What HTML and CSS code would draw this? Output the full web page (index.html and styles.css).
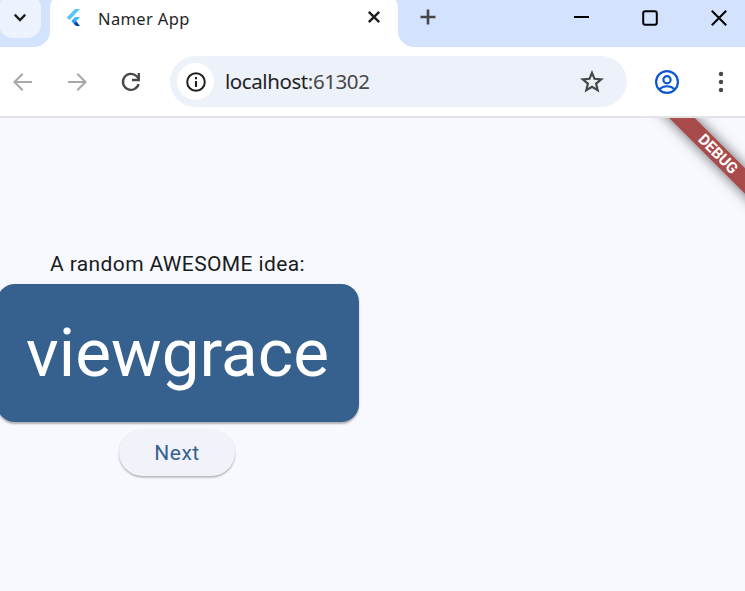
FILE: index.html
```html
<!DOCTYPE html>
<html lang="en">
<head>
<meta charset="utf-8">
<title>Namer App</title>
<link rel="stylesheet" href="styles.css">
</head>
<body>
<div class="window">
  <header class="titlebar">
    <div class="strip-left">
      <div class="tab-search"><svg width="14" height="10" viewBox="0 0 14 10"><path d="M1.7 1.7 7 7l5.3-5.3" fill="none" stroke="#1f1f1f" stroke-width="2.4"/></svg></div>
    </div>
    <div class="tab-slot">
      <div class="tab">
        <svg class="favicon" width="16" height="20" viewBox="0 0 16 20">
          <path d="M9 1h5L3.5 12 .8 9.5z" fill="#54c5f8"/>
          <path d="M9.2 9h4.8L9.7 13.4l1.3 1.4-2.5 2L5.5 13z" fill="#42b8f5"/>
          <path d="M5.5 13.2 8 10.8l2.6 2.5L8 15.8z" fill="#29a0ef"/>
          <path d="M7.8 15.8 10.4 13.6 14 18h-3.8z" fill="#01479b"/>
        </svg>
        <span class="tab-title">Namer App</span>
        <svg class="tab-close" width="14" height="14" viewBox="0 0 14 14"><path d="m1.8 1.8 10.4 10.4M12.2 1.8 1.8 12.2" stroke="#1f1f1f" stroke-width="2.4"/></svg>
      </div>
    </div>
    <div class="strip-right">
      <svg class="new-tab" width="16" height="16" viewBox="0 0 16 16"><path d="M8 .5v15M.5 8h15" stroke="#474747" stroke-width="2.6"/></svg>
      <svg class="minimize" width="15" height="2" viewBox="0 0 15 2"><path d="M0 1h15" stroke="#000" stroke-width="2"/></svg>
      <svg class="maximize" width="16" height="16" viewBox="0 0 16 16"><rect x="1.2" y="1.2" width="13.6" height="13.6" rx="2" fill="none" stroke="#000" stroke-width="2"/></svg>
      <svg class="close" width="16" height="16" viewBox="0 0 16 16"><path d="m.8.8 14.4 14.4M15.2.8.8 15.2" stroke="#000" stroke-width="2"/></svg>
    </div>
  </header>
  <nav class="toolbar">
    <svg class="back" width="20" height="18" viewBox="0 0 20 18"><path d="M19 9H2M9.7.8 1.5 9l8.2 8.2" fill="none" stroke="#a8a8a8" stroke-width="2.1"/></svg>
    <svg class="forward" width="20" height="18" viewBox="0 0 20 18"><path d="M1 9h17M10.3.8 18.5 9l-8.2 8.2" fill="none" stroke="#a8a8a8" stroke-width="2.1"/></svg>
    <svg class="reload" width="20" height="20" viewBox="0 0 20 20"><path d="M17.6 12.2A8 8 0 1 1 15.7 4.3L18 6.8" fill="none" stroke="#474747" stroke-width="2.3"/><path d="M17.8 1v7H11" fill="none" stroke="#474747" stroke-width="2.3"/></svg>
    <div class="omnibox">
      <div class="site-info"><svg width="20" height="20" viewBox="0 0 20 20"><circle cx="10" cy="10" r="8.8" fill="none" stroke="#1f1f1f" stroke-width="2"/><path d="M10 9v6M10 5v2.2" stroke="#1f1f1f" stroke-width="2.1"/></svg></div>
      <div class="url">localhost<span class="port">:61302</span></div>
      <svg class="star" width="24" height="23" viewBox="0 0 24 23"><path d="m12 2.8 2.5 6 6.7.6-5.1 4.3 1.6 6.4-5.7-3.4-5.7 3.4 1.6-6.4-5.1-4.3 6.7-.6z" fill="none" stroke="#474747" stroke-width="2.2"/></svg>
    </div>
    <svg class="profile" width="26" height="26" viewBox="0 0 26 26"><g fill="none" stroke="#0b57d0" stroke-width="2.2"><circle cx="13" cy="13" r="10.9"/><circle cx="13" cy="10.7" r="3.6"/><path d="M5.3 20.3c4.2-4.1 11.2-4.1 15.4 0"/></g></svg>
    <svg class="menu" width="6" height="22" viewBox="0 0 6 22"><g fill="#474747"><circle cx="3" cy="3" r="2.2"/><circle cx="3" cy="11" r="2.2"/><circle cx="3" cy="19" r="2.2"/></g></svg>
  </nav>
  <main class="page">
    <div class="banner">DEBUG</div>
    <div class="column">
      <p class="label">A random AWESOME idea:</p>
      <div class="card">viewgrace</div>
      <button class="next">Next</button>
    </div>
  </main>
</div>
</body>
</html>
```
FILE: styles.css
```css
* { box-sizing: border-box; }
body { margin: 0; background: #fff; }
svg { display: block; flex: none; }
.window { width: 745px; height: 591px; display: flex; flex-direction: column; overflow: hidden; }

.titlebar { display: flex; height: 47px; flex: none; overflow: hidden; background: #fff; }
.strip-left { width: 50px; background: #d3e3fd; border-bottom-right-radius: 16px; }
.tab-search { width: 42px; height: 44px; margin: -6px 0 0 -1px; border-radius: 14px; background: #ecf3fe; display: flex; align-items: center; justify-content: center; padding-top: 3px; }
.tab-slot { width: 348px; background: #d3e3fd; }
.tab { height: 54px; margin-top: -7px; padding: 0 17px 0 16px; border-radius: 15px 15px 0 0; background: #fff; display: flex; align-items: center; font-family: "Noto Sans", sans-serif; font-size: 16.5px; letter-spacing: .35px; color: #1f1f1f; }
.favicon { margin-top: -5px; }
.tab-title { flex: 1; margin: -4px 0 0 16px; white-space: nowrap; }
.tab-close { margin-top: -6px; }
.strip-right { flex: 1; display: flex; align-items: center; background: #d3e3fd; border-bottom-left-radius: 16px; padding: 0 18px 11px 22px; }
.new-tab { margin-top: -2px; }
.minimize { margin-left: 138px; margin-top: -2px; }
.maximize { margin-left: 53px; }
.close { margin-left: auto; }

.toolbar { height: 71px; flex: none; display: flex; align-items: center; background: #fff; border-bottom: 2px solid #e2e3e3; padding: 0 21px 0 13px; }
.forward { margin-left: 34px; }
.reload { margin-left: 34px; }
.omnibox { width: 457px; height: 51px; margin-left: 29px; border-radius: 26px; background: #ecf1fa; display: flex; align-items: center; padding: 0 23px 0 7px; }
.site-info { width: 37px; height: 37px; border-radius: 50%; background: #fff; display: flex; align-items: center; justify-content: center; }
.url { flex: 1; margin: -1px 0 0 11px; font: 20.5px "Noto Sans", sans-serif; letter-spacing: -.42px; color: #1f1f1f; }
.port { color: #474747; }
.profile { margin-left: 27px; }
.menu { margin-left: auto; }

.page { position: relative; flex: 1; overflow: hidden; background: #f8f9ff; font-family: Roboto, sans-serif; }
.banner { position: absolute; left: 618px; top: 27px; width: 200px; height: 18px; transform: rotate(45deg); background: #a94b4b; box-shadow: 0 0 14px rgba(0, 0, 0, .6); color: #fff; font-size: 15.3px; line-height: 18px; font-weight: 700; text-align: center; }
.column { width: 361px; margin-left: -3px; padding-top: 134px; display: flex; flex-direction: column; align-items: center; }
.label { margin: 0; height: 32px; line-height: 24px; font-size: 21px; letter-spacing: .375px; color: #191c20; white-space: nowrap; }
.card { width: 362px; height: 138px; border-radius: 18px; background: #36618e; color: #fff; font-size: 67.5px; line-height: 138px; text-align: center; box-shadow: 0 1.5px 2px rgba(0, 0, 0, .3); }
.next { width: 116px; height: 47px; margin-top: 7px; margin-right: 1px; padding: 0; border: 0; border-radius: 24px; background: #f2f3fa; color: #36618e; font: 400 21px Roboto, sans-serif; letter-spacing: .5px; box-shadow: 0 1.5px 2px rgba(0, 0, 0, .3); }
```
